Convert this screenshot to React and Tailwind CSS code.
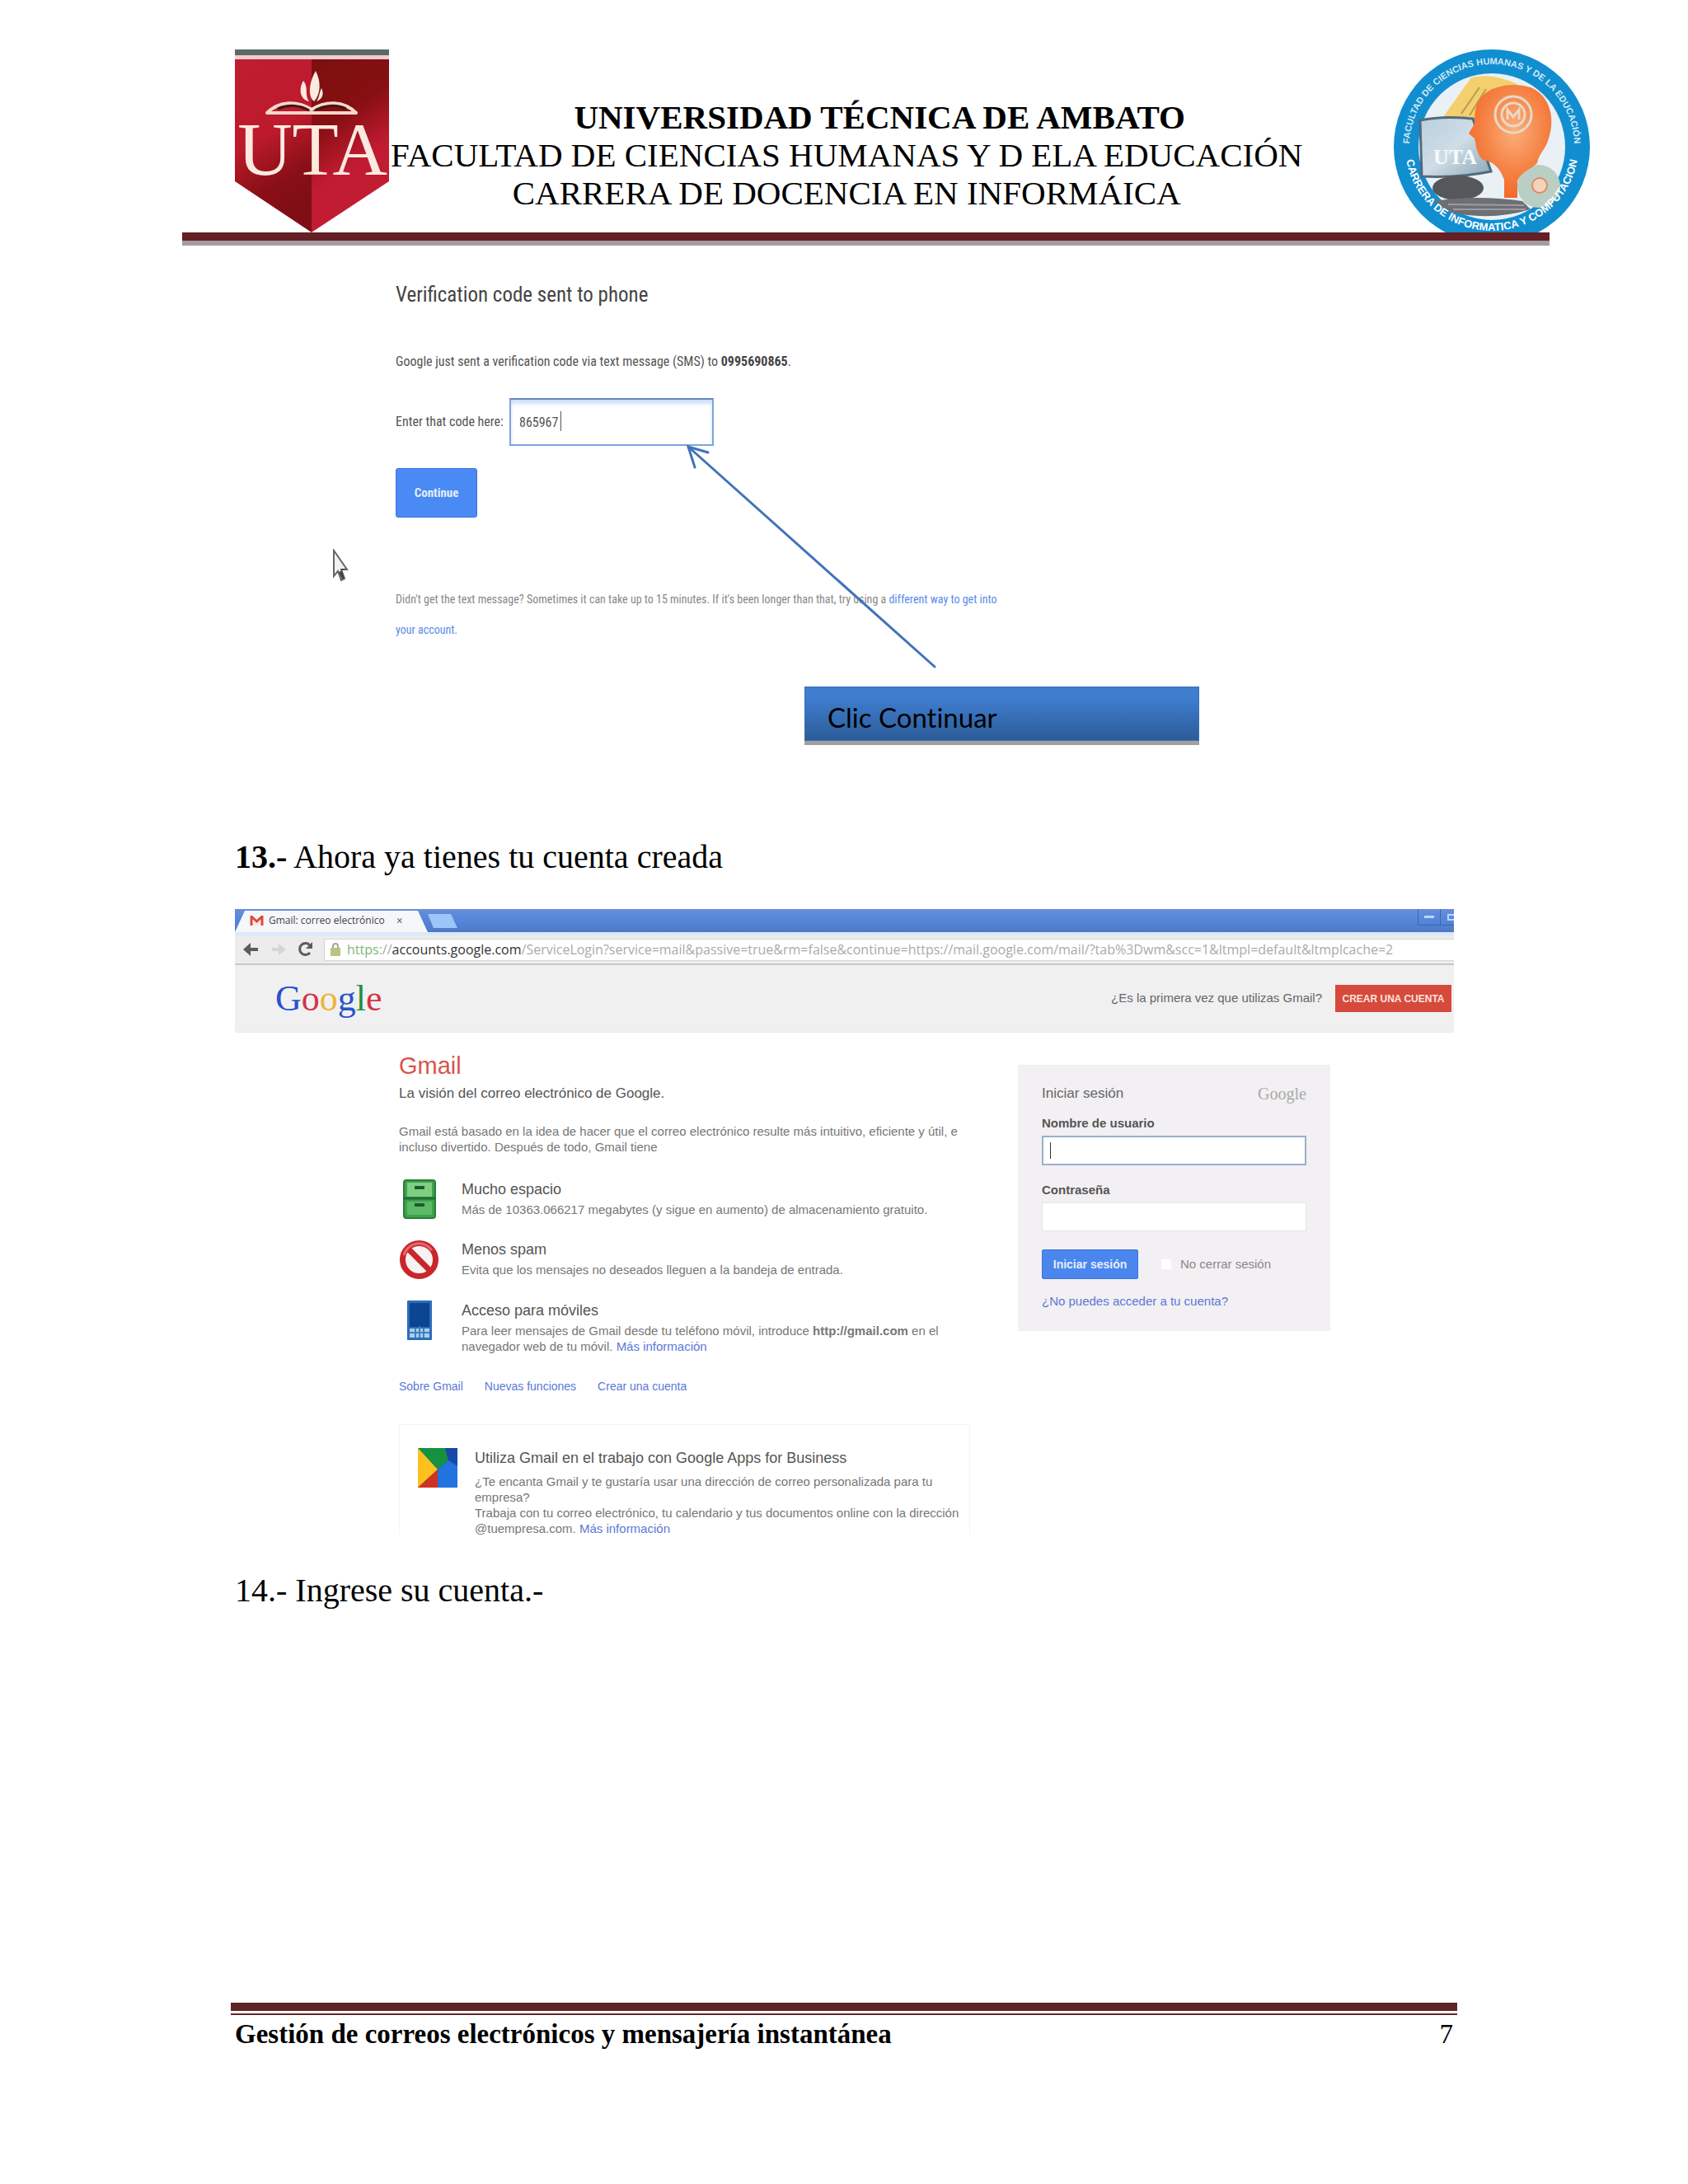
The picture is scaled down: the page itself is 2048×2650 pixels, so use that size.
const sans = "font-['Liberation_Sans',Arial,sans-serif]";
const narrow = "font-['Roboto_Condensed','Liberation_Sans_Narrow','Liberation_Sans',sans-serif]";

function ShieldLogo() {
  return (
    <svg className="h-[222px] w-[187px] flex-none" viewBox="0 0 187 222" role="img" aria-label="UTA">
      <defs>
        <linearGradient id="rightTop" x1="0" y1="0" x2="0.3" y2="1">
          <stop offset="0" stopColor="#7c110f" />
          <stop offset="0.4" stopColor="#860f12" />
          <stop offset="0.7" stopColor="#c01b31" />
          <stop offset="1" stopColor="#c41d33" />
        </linearGradient>
        <linearGradient id="leftTop" x1="0" y1="0" x2="0.25" y2="1">
          <stop offset="0" stopColor="#c01e30" />
          <stop offset="0.5" stopColor="#bd1a2d" />
          <stop offset="0.8" stopColor="#8a0f16" />
          <stop offset="1" stopColor="#7f0e14" />
        </linearGradient>
      </defs>
      <rect width="187" height="7" fill="#5c6a66" />
      <rect y="7" width="187" height="5" fill="#f3c9cf" />
      <path d="M0 12H93V222L0 160Z" fill="url(#leftTop)" />
      <path d="M93 12H187V160L93 222Z" fill="url(#rightTop)" />
      <g fill="#fbeadf">
        <path d="M98 26C105 40 104 54 96 63C88 57 90 40 98 26Z" />
        <path d="M83 38C90 46 84 56 90 63C79 61 77 48 83 38Z" />
        <path d="M105 47C109 55 105 61 99 63C103 57 102 53 105 47Z" />
      </g>
      <path d="M39 77C54 62 76 62 93 73C110 62 132 62 147 77Z" fill="none" stroke="#f6d8c9" strokeWidth="4" strokeLinejoin="round" />
      <path d="M52 72C66 66 80 68 90 74M97 74C108 68 122 66 135 72" fill="none" stroke="#43161a" strokeWidth="3" />
      <text x="94" y="152" textAnchor="middle" fontFamily="Liberation Serif" fontSize="92" fill="#fbeadf">UTA</text>
    </svg>
  );
}

function CareerSeal() {
  return (
    <svg className="ml-auto h-[222px] w-[238px] flex-none" viewBox="0 0 238 222" role="img" aria-label="Carrera de Informática y Computación">
      <defs>
        <path id="arcTop" d="M19 118A100 100 0 0 1 219 118" />
        <path id="arcBottom" d="M14 118A105 102 0 0 0 224 118" />
        <radialGradient id="head" cx="0.55" cy="0.4" r="0.6">
          <stop offset="0" stopColor="#fbb07c" />
          <stop offset="0.6" stopColor="#f58345" />
          <stop offset="1" stopColor="#f4692a" />
        </radialGradient>
        <linearGradient id="monitor" x1="0" y1="0" x2="1" y2="1">
          <stop offset="0" stopColor="#b9cfdf" />
          <stop offset="0.5" stopColor="#cfdde6" />
          <stop offset="1" stopColor="#8ca6b8" />
        </linearGradient>
      </defs>
      <ellipse cx="119" cy="118" rx="119" ry="118" fill="#118ed0" />
      <ellipse cx="119" cy="118" rx="89" ry="89" fill="#e9f0f6" />
      <path d="M60 82L94 34Q120 28 150 42L130 92Z" fill="#f4cf6d" />
      <path d="M82 78L104 46M92 80L112 48M102 80L120 48" stroke="#b99b52" strokeWidth="2" />
      <circle cx="176" cy="166" r="26" fill="#b9cfc4" />
      <circle cx="177" cy="165" r="9" fill="#f3d3bd" stroke="#e08a62" strokeWidth="2" />
      <path d="M32 86Q60 80 96 84L118 148Q80 156 34 154Z" fill="url(#monitor)" stroke="#55697a" strokeWidth="3" />
      <text x="48" y="139" fontFamily="Liberation Serif" fontWeight="bold" fontSize="26" fill="#f7fafc">UTA</text>
      <ellipse cx="78" cy="168" rx="31" ry="15" fill="#56575b" />
      <path d="M48 184Q100 176 156 184L166 194Q120 208 70 198Z" fill="#6d6f75" />
      <path d="M66 188L158 189M72 194L160 194" stroke="#9b9ca1" strokeWidth="2" />
      <path d="M100 70C106 46 140 38 166 46C190 56 196 84 188 108C184 122 176 126 174 138C166 146 154 148 150 160L150 180L134 180L134 158C128 142 120 136 108 134C100 126 100 116 98 108L91 102L98 90C98 84 98 76 100 70Z" fill="url(#head)" />
      <g fill="none" stroke="#e9d8c6" strokeWidth="3">
        <circle cx="145" cy="79" r="22" />
        <circle cx="145" cy="79" r="14" />
        <path d="M138 85V73L145 82L152 73V85" />
      </g>
      <text fontFamily="Liberation Sans" fontSize="11" fontWeight="bold" fill="#cfeaf7">
        <textPath href="#arcTop" startOffset="50%" textAnchor="middle">FACULTAD DE CIENCIAS HUMANAS Y DE LA EDUCACIÓN</textPath>
      </text>
      <text fontFamily="Liberation Sans" fontSize="13" fontWeight="bold" fill="#ffffff">
        <textPath href="#arcBottom" startOffset="50%" textAnchor="middle">CARRERA DE INFORMATICA Y COMPUTACION</textPath>
      </text>
    </svg>
  );
}

function Header() {
  return (
    <header>
      <div className="flex gap-[2px] pl-[285px] pr-[119px] pt-[60px]">
        <ShieldLogo />
        <div className="pt-[59px] text-center text-[41px] leading-[46px] whitespace-nowrap">
          <h1 className="pl-20 font-bold">UNIVERSIDAD TÉCNICA DE AMBATO</h1>
          <p>FACULTAD DE CIENCIAS HUMANAS Y D ELA EDUCACIÓN</p>
          <p>CARRERA DE DOCENCIA EN INFORMÁICA</p>
        </div>
        <CareerSeal />
      </div>
      <div className="mr-[168px] ml-[221px] h-4 border-b-[6px] border-[#a39d9f] bg-[#642024]" />
    </header>
  );
}

function Verification() {
  return (
    <section className={`relative pt-[42px] pl-[195px] text-[#555] ${narrow}`}>
      <h2 className="text-[25px] leading-9 text-[#444]">Verification code sent to phone</h2>
      <p className="mt-[49px] text-[16px] leading-7">
        Google just sent a verification code via text message (SMS) to <b className="text-[#444]">0995690865</b>.
      </p>
      <div className="mt-[30px] flex h-[58px] items-center gap-1 text-[16px]">
        <label htmlFor="code" className="w-[134px] whitespace-nowrap">Enter that code here:</label>
        <div className="relative h-full">
          <input id="code" defaultValue="865967" className="h-full w-[248px] border-2 border-[#7fa3dc] border-t-[#6485bd] bg-white px-[10px] shadow-[inset_0_5px_4px_#cfe0fb]" />
          <span className="absolute top-4 left-[62px] h-6 w-px bg-[#555]" />
        </div>
      </div>
      <button className="mt-[27px] block h-[60px] w-[99px] rounded-[3px] border border-[#3b74dd] bg-[#4a8af4] text-[15px] font-bold text-[#e4eefd]">Continue</button>
      <p className="mt-[81px] text-[14px] leading-[37px] text-[#888]">
        Didn't get the text message? Sometimes it can take up to 15 minutes. If it's been longer than that, try using a{" "}
        <a href="#way" className="text-[#5a8bea]">different way to get into<br />your account.</a>
      </p>
      <svg className="absolute top-[368px] left-[118px] h-10 w-5" viewBox="0 0 20 40">
        <path d="M2 2V33L7 27L11 38L15 36L11 25H18Z" fill="#f2f2f2" stroke="#666" strokeWidth="2" />
        <path d="M8 28L12 37L15 35L11 24H17Z" fill="#444" />
      </svg>
      <svg className="absolute top-[240px] left-[545px] h-[275px] w-[310px]" viewBox="0 0 310 275" fill="none" stroke="#4173b9" strokeWidth="3" strokeLinecap="round">
        <path d="M5 4L304 271M29 11L5 4L13 29" />
      </svg>
    </section>
  );
}

function Callout() {
  return (
    <div className="mt-[50px] ml-[691px] flex h-[66px] w-[479px] items-center border border-[#3f6fb4] bg-linear-to-b from-[#3f7dd0] from-20% to-[#2c5c98] pt-[10px] pl-[27px] font-[Lato,sans-serif] text-[33px] text-black shadow-[0_5px_0_#a0a0a0] [font-variant-ligatures:none]">
      Clic Continuar
    </div>
  );
}

function GoogleWord({ className }) {
  return (
    <span className={className}>
      <span className="text-[#2a4fd0]">G</span>
      <span className="text-[#d03545]">o</span>
      <span className="text-[#edb43c]">o</span>
      <span className="text-[#2a55c8]">g</span>
      <span className="text-[#1f9040]">l</span>
      <span className="text-[#d03545]">e</span>
    </span>
  );
}

function BrowserChrome() {
  return (
    <div>
      <div className="flex h-7 items-stretch overflow-hidden bg-linear-to-b from-[#678edb] via-[#5586da] to-[#4e79c4]">
        <div className="flex w-[234px] items-center gap-[6px] bg-[#f6f7f9] pl-[18px] text-[#444] [clip-path:polygon(12px_2px,222px_2px,100%_100%,0_100%)]">
          <svg className="h-3 w-[17px]" viewBox="0 0 17 12"><path d="M2 12V1L8.500 7L15 1V12" fill="#fbe9e7" stroke="#dc4b3e" strokeWidth="3" /></svg>
          <span className="font-['Open_Sans',sans-serif] text-[12px] whitespace-nowrap">Gmail: correo electrónico</span>
          <button aria-label="Cerrar pestaña" className="ml-2 text-[14px] font-bold text-[#666]">×</button>
        </div>
        <button aria-label="Nueva pestaña" className="mt-[6px] h-[17px] w-9 bg-[#9cc6f7] [clip-path:polygon(0_0,28px_0,100%_100%,7px_100%)]" />
        <div className="ml-auto flex">
          <button aria-label="Minimizar" className="flex h-5 w-7 items-center justify-center border border-t-0 border-[#3e66ae]"><span className="h-[3px] w-3 bg-[#bcd6ff]" /></button>
          <button aria-label="Maximizar" className="flex h-5 w-4 items-center justify-end border-b border-[#3e66ae]"><span className="h-2 w-2 border-2 border-r-0 border-[#bcd6ff]" /></button>
        </div>
      </div>
      <div className="flex h-10 items-center border-t-4 border-b-2 border-t-[#dbe8fa] border-b-[#c8c8c8] bg-[#ececec] pl-[10px]">
        <svg className="h-5 w-[18px]" viewBox="0 0 18 20"><path d="M0 10L9 2V8H18V12H9V18Z" fill="#5c5c5c" /></svg>
        <svg className="ml-4 h-5 w-[18px]" viewBox="0 0 18 20"><path d="M18 10L9 3V8H1V12H9V17Z" fill="#d4d4d4" /></svg>
        <svg className="ml-[14px] h-5 w-5" viewBox="0 0 20 20" fill="none" stroke="#5c5c5c" strokeWidth="3"><path d="M15 14A7 7 0 1 1 15 5" /><path d="M18 1V9H10Z" fill="#5c5c5c" stroke="none" /></svg>
        <div role="textbox" aria-label="Dirección" className="ml-3 flex h-[27px] flex-1 items-center border border-r-0 border-[#d6d6d6] bg-white pl-[7px] font-['Open_Sans',sans-serif] text-[16px] whitespace-nowrap text-[#aaa]">
          <svg className="mr-2 h-[18px] w-3 flex-none" viewBox="0 0 12 18"><path d="M3 8V5A3 3 0 0 1 9 5V8" fill="none" stroke="#a5a98a" strokeWidth="2" /><rect x="0" y="7" width="12" height="10" fill="#b9c386" /></svg>
          <span className="text-[#7db873]">https</span>://<span className="text-[#333]">accounts.google.com</span>/ServiceLogin?service=mail&amp;passive=true&amp;rm=false&amp;continue=https://mail.google.com/mail/?tab%3Dwm&amp;scc=1&amp;ltmpl=default&amp;ltmplcache=2
        </div>
      </div>
    </div>
  );
}

function CabinetIcon() {
  return (
    <svg className="h-12 w-10" viewBox="0 0 40 48">
      <rect x="1" y="1" width="38" height="46" rx="3" fill="#3da24c" stroke="#2a7d3a" strokeWidth="2" />
      <rect x="5" y="4" width="30" height="17" fill="#7fcf82" />
      <rect x="5" y="27" width="30" height="16" fill="#5cba66" />
      <path d="M1 23H39" stroke="#1f6b34" strokeWidth="3" />
      <path d="M14 10H26M14 31H26" stroke="#1f5a2d" strokeWidth="4" />
    </svg>
  );
}

function NoSpamIcon() {
  return (
    <svg className="h-[49px] w-[49px]" viewBox="0 0 49 49" fill="none" stroke="#c9262c">
      <circle cx="24.500" cy="24.500" r="20" fill="#f8f1f1" strokeWidth="7" />
      <path d="M11 11L38 38" strokeWidth="7" />
      <path d="M6 19A19 19 0 0 1 40 13" stroke="#e06a70" strokeWidth="3" />
    </svg>
  );
}

function PhoneIcon() {
  return (
    <svg className="h-12 w-[30px]" viewBox="0 0 30 48">
      <rect width="30" height="48" rx="1" fill="#2c6cba" />
      <rect x="3" y="3" width="24" height="29" fill="#0c4590" />
      <rect x="3" y="34" width="24" height="11" fill="#a9cdea" />
      <path d="M10 34V45M15 31V45M20 34V45M3 39H27" stroke="#3f7fc2" strokeWidth="2" />
    </svg>
  );
}

function AppsIcon() {
  return (
    <svg className="h-12 w-12 flex-none" viewBox="0 0 48 48">
      <rect width="48" height="48" fill="#1c62d6" />
      <path d="M0 0H34L38 14L24 26Z" fill="#15913f" />
      <path d="M33 0H48V22L37 15Z" fill="#1749a8" />
      <path d="M0 0L24 26L0 48Z" fill="#fbc21d" />
      <path d="M0 48L24 26V48Z" fill="#d03222" />
      <path d="M24 26L37 15L48 22V48H24Z" fill="#2272e0" />
    </svg>
  );
}

function Feature({ icon, title, children }) {
  return (
    <li className="flex">
      <div className="flex w-[49px] flex-none justify-center">{icon}</div>
      <div className="ml-[27px]">
        <h4 className="text-[18px] leading-6 text-[#555]">{title}</h4>
        <p className="mt-[3px] text-[15px] leading-[19px] whitespace-nowrap text-[#777]">{children}</p>
      </div>
    </li>
  );
}

const link = "text-[#5b78d8]";

function GmailPage() {
  return (
    <div className={sans}>
      <div className="flex h-[82px] items-center border-b border-[#ebebeb] bg-[#f1f0f1] pr-[3px] pl-[49px]">
        <GoogleWord className="font-['Liberation_Serif',serif] text-[44px] leading-[50px]" />
        <p className="ml-auto text-[15px] text-[#666]">¿Es la primera vez que utilizas Gmail?</p>
        <button className="ml-4 h-[33px] w-[141px] bg-[#d64a3c] text-[12px] font-bold text-[#fbe3df]">CREAR UNA CUENTA</button>
      </div>
      <div className="flex items-start pl-[199px]">
        <div className="w-[693px] flex-none">
          <h3 className="mt-[22px] text-[29px] leading-9 text-[#d9544a]">Gmail</h3>
          <p className="mt-1 text-[17px] leading-6 text-[#555]">La visión del correo electrónico de Google.</p>
          <p className="mt-6 text-[15px] leading-[19px] whitespace-nowrap text-[#777]">
            Gmail está basado en la idea de hacer que el correo electrónico resulte más intuitivo, eficiente y útil, e<br />incluso divertido. Después de todo, Gmail tiene
          </p>
          <ul className="mt-[30px] flex flex-col gap-[25px]">
            <Feature icon={<CabinetIcon />} title="Mucho espacio">Más de 10363.066217 megabytes (y sigue en aumento) de almacenamiento gratuito.</Feature>
            <Feature icon={<NoSpamIcon />} title="Menos spam">Evita que los mensajes no deseados lleguen a la bandeja de entrada.</Feature>
            <Feature icon={<PhoneIcon />} title="Acceso para móviles">
              Para leer mensajes de Gmail desde tu teléfono móvil, introduce <b>http://gmail.com</b> en el<br />navegador web de tu móvil. <a href="#movil" className={link}>Más información</a>
            </Feature>
          </ul>
          <nav className={`mt-[29px] flex gap-[26px] text-[14px] leading-5 ${link}`}>
            <a href="#sobre">Sobre Gmail</a>
            <a href="#nuevas">Nuevas funciones</a>
            <a href="#crear">Crear una cuenta</a>
          </nav>
          <div className="mt-9 flex h-[134px] border border-b-0 border-[#f3f3f7] pt-7 pl-[22px]">
            <AppsIcon />
            <div className="ml-[21px] text-[15px] leading-[19px] whitespace-nowrap text-[#777]">
              <h4 className="text-[18px] leading-6 text-[#555]">Utiliza Gmail en el trabajo con Google Apps for Business</h4>
              <p className="mt-[7px]">¿Te encanta Gmail y te gustaría usar una dirección de correo personalizada para tu<br />empresa?</p>
              <p>Trabaja con tu correo electrónico, tu calendario y tus documentos online con la dirección<br />@tuempresa.com. <a href="#apps" className={link}>Más información</a></p>
            </div>
          </div>
        </div>
        <form className="mt-[39px] ml-[58px] h-[323px] w-[379px] flex-none bg-[#f2f0f2] px-[29px] pt-[23px] text-[15px] text-[#777]" onSubmit={(e) => e.preventDefault()}>
          <div className="flex items-center justify-between leading-6">
            <h3 className="text-[17px] text-[#666]">Iniciar sesión</h3>
            <span className="font-['Liberation_Serif',serif] text-[20px] text-[#aaa]">Google</span>
          </div>
          <label htmlFor="user" className="mt-[14px] block text-[15px] leading-5 font-bold text-[#555]">Nombre de usuario</label>
          <div className="relative mt-[5px]">
            <input id="user" className="block h-9 w-full border-2 border-[#9aaed0] bg-white px-2" />
            <span className="absolute top-2 left-[10px] h-5 w-px bg-[#333]" />
          </div>
          <label htmlFor="pass" className="mt-5 block text-[15px] leading-5 font-bold text-[#555]">Contraseña</label>
          <input id="pass" type="password" className="mt-[5px] block h-[35px] w-full border border-[#e6e6e6] bg-white px-2" />
          <div className="mt-[22px] flex items-center">
            <button className="h-9 w-[117px] rounded-[2px] border border-[#3b74dd] bg-[#4a86ee] text-[14px] font-bold text-[#e4eefd]">Iniciar sesión</button>
            <label className="ml-7 flex items-center gap-[11px] text-[#888]">
              <input type="checkbox" className="h-3 w-3 appearance-none rounded-[2px] bg-white" />
              No cerrar sesión
            </label>
          </div>
          <a href="#ayuda" className={`mt-[17px] block text-[15px] leading-5 ${link}`}>¿No puedes acceder a tu cuenta?</a>
        </form>
      </div>
    </div>
  );
}

export default function App() {
  return (
    <div className="flex min-h-screen flex-col bg-white font-['Liberation_Serif','Times_New_Roman',serif] text-black">
      <Header />
      <main className="pr-[284px] pl-[285px]">
        <Verification />
        <Callout />
        <p className="mt-[118px] text-[40px] leading-[46px]"><b>13.-</b> Ahora ya tienes tu cuenta creada</p>
        <div className="mt-10 overflow-hidden">
          <BrowserChrome />
          <GmailPage />
        </div>
        <p className="mt-[45px] text-[40px] leading-[46px]">14.- Ingrese su cuenta.-</p>
      </main>
      <footer className="mx-[280px] mt-auto pb-[162px]">
        <div className="h-[10px] bg-[#602424]" />
        <div className="mt-[3px] h-[2px] bg-[#602424]" />
        <div className="flex justify-between px-[5px] pt-[3px] text-[33px] leading-10">
          <b>Gestión de correos electrónicos y mensajería instantánea</b>
          <span>7</span>
        </div>
      </footer>
    </div>
  );
}
